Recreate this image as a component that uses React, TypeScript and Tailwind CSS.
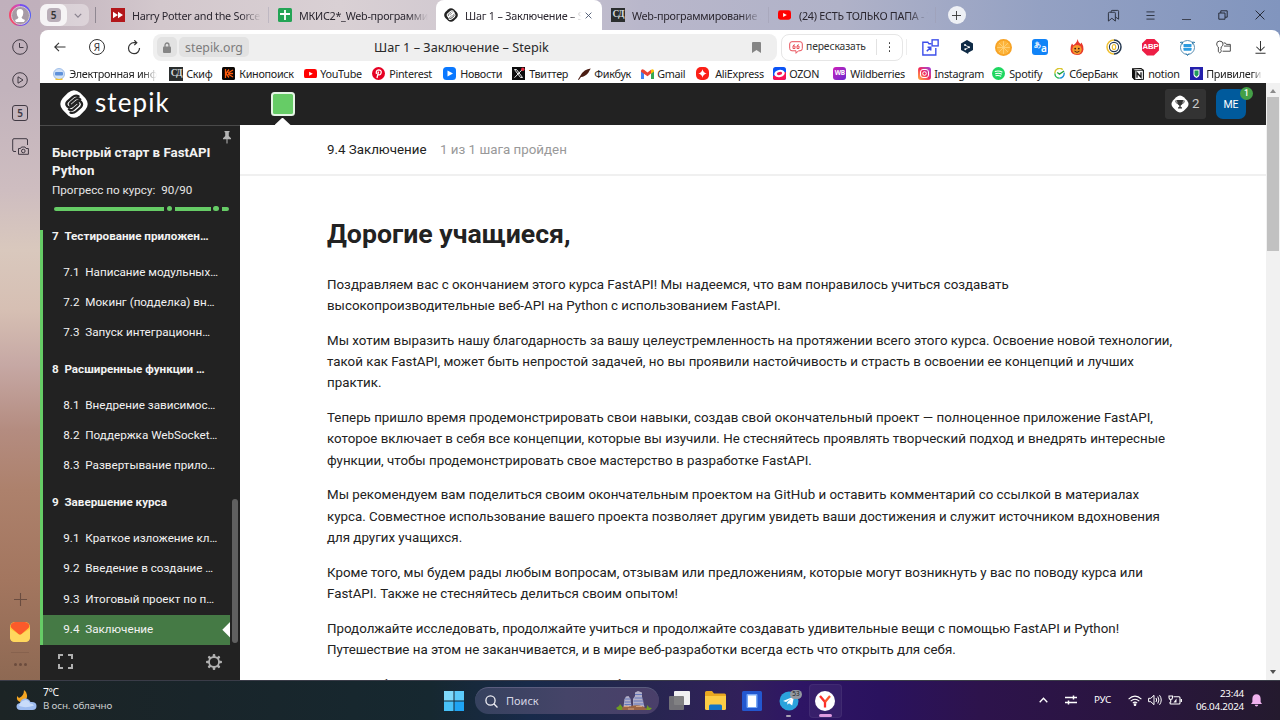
import React from 'react';
import type { ReactNode } from 'react';

type Kids = { children?: ReactNode };

/* ---------- browser tabs ---------- */

function StepikMark({ className, dark }: { className: string; dark?: boolean }) {
  const body = dark ? '#222' : '#fff';
  const ink = dark ? '#fff' : '#222';
  return (
    <svg viewBox="0 0 28 28" className={className}>
      <path d="M8 2.800Q14-2.200 20 2.800L25.200 8Q30.200 14 25.200 20L20 25.200Q14 30.200 8 25.200L2.800 20Q-2.200 14 2.800 8Z" fill={body} />
      <path d="M18.600 6.300Q15.300 4.800 12.500 7.200L7.400 11.600Q5.200 14 7.300 16.400Q9.800 18.400 12.500 16.200L16 13.200Q17.300 12.200 18.200 13.200Q19 14.200 17.900 15.300L13.200 19.300Q11.200 20.800 8.800 19.400" fill="none" stroke={ink} strokeWidth="2.200" strokeLinecap="round" />
      <path d="M10.400 22.600Q13.500 23.600 16.200 21.200L21 17Q23.200 14.500 21 11.800Q18.500 9.600 15.700 12L12.500 14.800Q11 15.800 10 14.900Q9.300 13.800 10.400 12.800L15 8.900Q17.500 7.400 20.300 9.300" fill="none" stroke={ink} strokeWidth="2.200" strokeLinecap="round" />
    </svg>
  );
}

function YouTubeMark({ className }: { className: string }) {
  return (
    <svg viewBox="0 0 14 10" className={className}>
      <rect width="14" height="10" rx="2.600" fill="#f00" />
      <path d="M5.500 2.800L9.500 5L5.500 7.200Z" fill="#fff" />
    </svg>
  );
}

function SkifMark() {
  return (
    <span className="flex size-3.5 shrink-0 items-center justify-center bg-[#2b2e2e] font-['Liberation_Serif',serif] text-[9.500px] leading-none font-bold tracking-[-0.1em] text-[#d5dada]">
      СД
    </span>
  );
}

const fade = 'overflow-hidden whitespace-nowrap [mask-image:linear-gradient(to_right,#000_84%,transparent)]';

function Tab({ icon, label, divider }: { icon: ReactNode; label: string; divider?: boolean }) {
  return (
    <div className="flex h-[30px] w-[167px] items-center pl-[9px]">
      <span className="flex w-[21px] shrink-0">{icon}</span>
      <span className={`${fade} w-[129px] pt-[2px] text-[10.8px] tracking-[-0.025em] text-[#2b2730]`}>{label}</span>
      {divider && <span className="ml-[7px] h-4 w-px bg-[#9c98ac]/40" />}
    </div>
  );
}

function TabStrip() {
  return (
    <div className="flex h-[30px] items-center">
      <div className="flex h-[22px] w-[49px] shrink-0 items-center rounded-[7px] bg-white/35">
        <div className="flex h-[22px] w-[27px] items-center justify-center rounded-[7px] bg-white/75">
          <span className="flex size-[14px] items-center justify-center rounded bg-[#b9aeb8] text-[10px] leading-none font-semibold text-[#333]">5</span>
        </div>
        <svg viewBox="0 0 10 6" className="ml-[7px] h-[5px] w-2"><path d="M1 1L5 5L9 1" fill="none" stroke="#8b8490" strokeWidth="1.600" /></svg>
      </div>
      <span className="ml-1.5 h-4 w-px shrink-0 bg-[#8f8791]" />
      <div className="ml-[6px] flex shrink-0 items-center">
        <Tab
          divider
          icon={<svg viewBox="0 0 14 14" className="size-3.5"><rect width="14" height="14" fill="#b3171b" /><path d="M2 3.800L7 7L2 10.200ZM7 3.800L12 7L7 10.200Z" fill="#fff" /></svg>}
          label="Harry Potter and the Sorcerer"
        />
        <Tab
          icon={<svg viewBox="0 0 14 14" className="size-3.5"><rect width="14" height="14" rx="1.500" fill="#23a455" /><path d="M7 2V12M2 6H12" stroke="#fff" strokeWidth="1.800" /></svg>}
          label="МКИС2*_Web-программирование"
        />
        <div className="flex h-[30px] w-[166px] items-center rounded-t-[8px] bg-white pl-[8px]">
          <StepikMark dark className="size-[14px] shrink-0" />
          <span className="ml-[7px] w-[119px] overflow-hidden pt-[2px] text-[10.800px] tracking-[-0.02em] whitespace-nowrap text-[#2b2730] [mask-image:linear-gradient(to_right,#000_88%,transparent_98%)]">
            Шаг 1 – Заключение – Stepik
          </span>
          <svg viewBox="0 0 8 8" className="ml-px size-[7px]"><path d="M.7.7L7.300 7.300M7.300.7L.7 7.300" stroke="#44506a" strokeWidth="1" /></svg>
        </div>
        <Tab divider icon={<SkifMark />} label="Web-программирование 2" />
        <Tab divider icon={<YouTubeMark className="h-[10px] w-[13px]" />} label="(24) ЕСТЬ ТОЛЬКО ПАПА - YouTube" />
      </div>
      <div className="ml-[11.500px] flex size-[18px] shrink-0 items-center justify-center rounded-full bg-[#eef0f5]">
        <svg viewBox="0 0 10 10" className="size-[9px]"><path d="M5 0V10M0 5H10" stroke="#333" strokeWidth="1" /></svg>
      </div>
      <div className="ml-[129px] flex shrink-0 items-center text-[#272c38]">
        <div className="flex w-[37px] justify-center">
          <svg viewBox="0 0 14 14" className="size-[13px]" fill="none" stroke="currentColor" strokeWidth="1"><path d="M1.500 4.500Q1.500 3.500 2.500 3.500H8Q9 3.500 9 4.500V13L5.250 10L1.500 13ZM4.500 3.500V2.500Q4.500 1.500 5.500 1.500H11.500Q12.500 1.500 12.500 2.500V11L9 8.500" /></svg>
        </div>
        <div className="flex w-[37px] justify-center">
          <svg viewBox="0 0 10 10" className="size-[9px]" stroke="currentColor" strokeWidth="1"><path d="M.5 1H9.500M.5 5H9.500M.5 9H9.500" /></svg>
        </div>
        <div className="flex w-[36px] justify-center pt-2">
          <span className="h-px w-[9px] bg-[#3d4252]" />
        </div>
        <div className="flex w-[37px] justify-center">
          <svg viewBox="0 0 10 10" className="size-[10px]" fill="none" stroke="currentColor" strokeWidth="1"><path d="M.8 3H7V9.200H.8ZM2.800 3V.8H9.200V7.200H7" /></svg>
        </div>
        <div className="flex w-[36px] justify-center">
          <svg viewBox="0 0 10 10" className="size-[10px]" stroke="currentColor" strokeWidth="1"><path d="M.6.6L9.400 9.400M9.400.6L.6 9.400" /></svg>
        </div>
      </div>
    </div>
  );
}

/* ---------- toolbar ---------- */

function Slot({ children }: Kids) {
  return <div className="flex w-[36.700px] shrink-0 items-center justify-center">{children}</div>;
}

function Toolbar() {
  return (
    <div className="flex h-9 items-center pb-[2px] text-[#333]">
      <div className="flex w-[113px] shrink-0 items-center pl-[2px]">
        <Slot><svg viewBox="0 0 12 10" className="h-[10px] w-3" fill="none" stroke="currentColor" strokeWidth="1.100"><path d="M11.500 5H1M5 .8L.8 5L5 9.200" /></svg></Slot>
        <Slot>
          <span className="flex size-4 items-center justify-center rounded-full border border-[#333] text-[10px] leading-none">Я</span>
        </Slot>
        <Slot><svg viewBox="0 0 14 15" className="h-[15px] w-[14px]" fill="none" stroke="currentColor" strokeWidth="1.200"><path d="M12.500 8A5.500 5.500 0 1 1 7 2.700H9.500M7.300.3L9.800 2.700L7.300 5.200" /></svg></Slot>
      </div>
      <div className="flex h-[27px] w-[624px] shrink-0 items-center rounded-lg bg-[#efefef] pl-1">
        <div className="flex h-[20px] w-5 items-center justify-center rounded-[5px] bg-[#e2e2e2]">
          <svg viewBox="0 0 8 11" className="h-[11px] w-2"><path d="M2 5V3.200A2 2.200 0 0 1 6 3.200V5" fill="none" stroke="#858585" strokeWidth="1.300" /><rect y="4.600" width="8" height="6.400" rx="1" fill="#858585" /></svg>
        </div>
        <div className="ml-0.5 flex h-[20px] w-[70px] items-center justify-center rounded-[5px] bg-[#e2e2e2] pt-[2px] text-[12.300px] text-[#7c7c7c]">stepik.org</div>
        <div className="ml-[125px] w-[378px] pt-[2px] text-[12.730px] whitespace-nowrap text-[#2a2a2a]">Шаг 1 – Заключение – Stepik</div>
        <svg viewBox="0 0 9 11" className="h-[11px] w-[9px]"><path d="M0 1Q0 0 1 0H8Q9 0 9 1V11L4.500 8L0 11Z" fill="#858585" /></svg>
      </div>
      <div className="ml-1 flex h-[27px] w-[122px] shrink-0 items-center rounded-lg border border-[#e6e6e6] pl-[7px]">
        <svg viewBox="0 0 14 13" className="h-[13px] w-[14px]" fill="none" stroke="#e8505b" strokeWidth="1">
          <path d="M3 .7H11Q13.300.7 13.300 3V7.500Q13.300 9.800 11 9.800H9.500L7 12.300V9.800H3Q.7 9.800.7 7.500V3Q.7.7 3 .7Z" />
          <path d="M5.500 3.300L4 5H6V7.500H4V5M9.500 3.300L8 5H10V7.500H8V5" />
        </svg>
        <span className="ml-[3px] w-[61px] text-[10.300px] tracking-[-0.01em] whitespace-nowrap text-[#333]">пересказать</span>
        <span className="ml-[9px] h-4 w-px bg-[#e2e2e2]" />
        <span className="ml-[12px] flex flex-col gap-[2.800px]">
          <i className="size-[1.300px] rounded-full bg-[#333]" /><i className="size-[1.300px] rounded-full bg-[#333]" /><i className="size-[1.300px] rounded-full bg-[#333]" />
        </span>
      </div>
      <span className="ml-[3px] h-4 w-px shrink-0 bg-[#ededed]" />
      <div className="ml-[5px] flex shrink-0 items-center">
        <Slot><svg viewBox="0 0 16 16" className="size-[17px]" fill="none" stroke="#3d4eea" strokeWidth="1.300"><path d="M9 4.500H6.500L5.500 3H.8V15H13V8.500" /><rect x="9.500" y=".8" width="5.700" height="5.700" /><path d="M4.500 11.500L8 8M5.200 7.800H8.200V10.800" strokeWidth="1.500" /></svg></Slot>
        <Slot><svg viewBox="0 0 14 14" className="size-[14px]"><path d="M7 0L13 3.500V10L8.500 12.500L8 14L7 13.200L1 10V3.500Z" fill="#0f2b46" /><path d="M5 5L9 7.200L5.500 9.200" fill="none" stroke="#fff" strokeWidth=".8" /><g fill="#fff"><circle cx="5" cy="5" r="1" /><circle cx="9" cy="7.200" r="1" /><circle cx="5.300" cy="9.200" r="1" /></g></svg></Slot>
        <Slot><svg viewBox="0 0 16 16" className="size-[17px]"><circle cx="8" cy="8" r="8" fill="#f7a325" /><circle cx="8" cy="8" r="6.300" fill="#fcb43c" /><path d="M8 2V14M2 8H14M3.800 3.800L12.200 12.200M12.200 3.800L3.800 12.200" stroke="#ffd27c" strokeWidth=".8" /></svg></Slot>
        <Slot>
          <div className="flex size-4 items-center justify-center rounded-[3px] bg-[#1183f7] text-[10px] leading-none font-semibold tracking-tight text-white"><span className="mb-[5px] text-[7px]">あ</span><span className="mt-0.5">a</span></div>
        </Slot>
        <Slot><svg viewBox="0 0 14 16" className="h-4 w-[14px]"><path d="M7.500 0Q8 3 10.500 5L11.500 3.500Q13.800 7 13.500 10.500Q12.500 16 7 16Q1 15.500.5 10.500Q.3 7 2 4.500L3.300 6.200Q7 4 7.500 0Z" fill="#e8392b" /><circle cx="7" cy="10.600" r="4.700" fill="#f79a2c" /><circle cx="5.200" cy="9.600" r=".9" fill="#3a1d14" /><circle cx="8.800" cy="9.600" r=".9" fill="#3a1d14" /><path d="M4.500 12.200Q7 14.500 9.500 12.200" fill="none" stroke="#3a1d14" strokeWidth=".9" /></svg></Slot>
        <Slot><svg viewBox="0 0 16 16" className="size-4" fill="none"><path d="M8 1A7 7 0 1 0 8 15" stroke="#f0c030" strokeWidth="1.500" /><path d="M8 1A7 7 0 0 1 8 15" stroke="#24374f" strokeWidth="1.500" /><circle cx="8" cy="8" r="4.600" stroke="#24374f" strokeWidth="1.100" /><ellipse cx="8" cy="8" rx="1.700" ry="2.500" stroke="#f0c030" strokeWidth="1.200" /></svg></Slot>
        <Slot>
          <div className="flex size-[17px] items-center justify-center bg-[#ed1e45] font-['Liberation_Sans',sans-serif] text-[7.800px] leading-none font-bold tracking-[-0.02em] text-white [clip-path:polygon(30%_0,70%_0,100%_30%,100%_70%,70%_100%,30%_100%,0_70%,0_30%)]">ABP</div>
        </Slot>
        <Slot><svg viewBox="0 0 17 17" className="size-[17px]" fill="none"><circle cx="8.500" cy="8.500" r="7" stroke="#5c8fb3" strokeWidth="1" /><rect x="4.500" y="5" width="8" height="3" rx=".6" fill="#2b9be0" /><rect x="4.500" y="8.700" width="8" height="3" rx=".6" fill="#2b9be0" /><path d="M1 3.500L3.500 3L3 5.500M16 3.500L13.500 3L14 5.500M7 14.500L8.500 16.500L10 14.500" stroke="#2b78a8" strokeWidth="1" /></svg></Slot>
        <Slot><svg viewBox="0 0 16 14" className="h-[14px] w-[15px]" fill="none" stroke="#444" strokeWidth="1"><path d="M2.500 7V12L4 13.300L5.500 12V10.500L5 9.500L5.500 8.500V7Q7.500 6 7.500 3.800Q7.300.7 4 .7Q.7.7.7 3.800Q.7 6 2.500 7" /><path d="M8 2.700H10L11 4.200H15.300V11.500H7M8.500 6H15" /></svg></Slot>
        <Slot><svg viewBox="0 0 12 14" className="h-[13px] w-[11px]" fill="none" stroke="#333" strokeWidth="1.100"><path d="M6 0V10.500M1.500 6.200L6 10.700L10.500 6.200M.5 13.400H11.500" /></svg></Slot>
      </div>
    </div>
  );
}

/* ---------- bookmarks ---------- */

const bookmarks: { label: string; slot: string; icon: ReactNode; gap: string; text?: string }[] = [
  {
    label: 'Электронная информ', slot: 'w-[116px]', gap: 'w-4', text: `${fade} w-[88px]`,
    icon: <svg viewBox="0 0 12 12" className="size-3"><circle cx="6" cy="6" r="5.500" fill="#cfe0f7" stroke="#8fb2e4" strokeWidth=".8" /><rect x="2" y="4" width="8" height="3.500" rx="1" fill="#5e90da" /><path d="M2.500 10.800Q6 12.500 9.500 10.800" stroke="#f2c22e" strokeWidth="1.500" fill="none" /></svg>,
  },
  { label: 'Скиф', slot: 'w-[53px]', gap: 'w-[17px]', icon: <SkifMark /> },
  {
    label: 'Кинопоиск', slot: 'w-[82px]', gap: 'w-[17px]',
    icon: <svg viewBox="0 0 13 13" className="size-[13px]"><rect width="13" height="13" rx="1.500" fill="#0c0705" /><path d="M3.500 2V11M4 6.500L7 2.500M4 6.500L7 10.500M6 6L11 3M6.500 6.500H11M6 7L11 10" stroke="#ff5a0a" strokeWidth="1.300" /></svg>,
  },
  { label: 'YouTube', slot: 'w-[68px]', gap: 'w-4', icon: <YouTubeMark className="h-[9.500px] w-[13px]" /> },
  {
    label: 'Pinterest', slot: 'w-[71px]', gap: 'w-[17px]',
    icon: <svg viewBox="0 0 13 13" className="size-[13px]"><circle cx="6.500" cy="6.500" r="6.500" fill="#e60023" /><path d="M6.500 4.500L5 11M4.500 7Q3.500 3 6.700 2.900Q9.500 3 9.200 5.500Q8.800 8 7 7.900Q6.200 7.800 6 7.200" fill="none" stroke="#fff" strokeWidth="1.300" /></svg>,
  },
  {
    label: 'Новости', slot: 'w-[69px]', gap: 'w-[17px]',
    icon: <svg viewBox="0 0 13 13" className="size-[13px]"><rect width="13" height="13" rx="3.500" fill="#0a78ff" /><path d="M4.500 3.500L10 6.500L4.500 9.500Z" fill="#fff" /></svg>,
  },
  {
    label: 'Твиттер', slot: 'w-[66px]', gap: 'w-[17px]',
    icon: <svg viewBox="0 0 13 13" className="size-[13px]"><rect width="13" height="13" fill="#0c0c0e" /><path d="M2.500 2.500H4.500L10.500 10.500H8.500Z" fill="none" stroke="#fff" strokeWidth=".9" /><path d="M10.500 2.300L2.500 10.700" stroke="#fff" strokeWidth=".9" /><circle cx="10.800" cy="2.200" r="1.700" fill="#e8283c" /></svg>,
  },
  {
    label: 'Фикбук', slot: 'w-[63px]', gap: 'w-4',
    icon: <svg viewBox="0 0 13 12" className="h-3 w-[13px]"><path d="M0 11.500L2.500 7.500Q6 1 12.800.5Q11.500 2.500 10.500 4.500Q7 8.800 3 9L.8 12Z" fill="#4a1d13" /></svg>,
  },
  {
    label: 'Gmail', slot: 'w-[55px]', gap: 'w-4',
    icon: <svg viewBox="0 0 13 10" className="h-[10px] w-[13px]"><path d="M0 1.500V10H3V4.300Z" fill="#4285f4" /><path d="M13 1.500V10H10V4.300Z" fill="#34a853" /><path d="M0 1.800Q.5-.8 3 .8L6.500 3.500L10 .8V4.500L6.500 7.200L0 2.800Z" fill="#ea4335" /><path d="M10 .8Q12.500-.8 13 1.800V2.500L10 4.700Z" fill="#fbbc04" /></svg>,
  },
  {
    label: 'AliExpress', slot: 'w-[77px]', gap: 'w-[19px]',
    icon: <svg viewBox="0 0 13 13" className="size-[13px]"><rect width="13" height="13" rx="5" fill="#fb1f16" /><path d="M6.500 2.300Q7.200 5.800 10.700 6.500Q7.200 7.200 6.500 10.700Q5.800 7.200 2.300 6.500Q5.800 5.800 6.500 2.300Z" fill="#fff" /></svg>,
  },
  {
    label: 'OZON', slot: 'w-[60px]', gap: 'w-4',
    icon: <svg viewBox="0 0 13 13" className="size-[13px]"><rect width="13" height="13" rx="2.500" fill="#0b53f5" /><path d="M0 9L13 5V10.500Q13 13 10.500 13H2.500Q0 13 0 10.500Z" fill="#f91155" /><ellipse cx="6.500" cy="6.500" rx="5.300" ry="3.700" fill="#fff" transform="rotate(-12 6.500 6.500)" /><ellipse cx="6.500" cy="6.500" rx="2.700" ry="1.600" fill="#f91155" transform="rotate(-12 6.500 6.500)" /></svg>,
  },
  {
    label: 'Wildberries', slot: 'w-[85px]', gap: 'w-[17px]',
    icon: <span className="flex size-[13px] items-center justify-center rounded-[3px] bg-linear-to-br from-[#ce12b8] to-[#6a1fd0] text-[6.500px] leading-none font-bold text-white">WB</span>,
  },
  {
    label: 'Instagram', slot: 'w-[74px]', gap: 'w-4',
    icon: (
      <span className="flex size-[13px] items-center justify-center rounded-[3px] bg-linear-to-tr from-[#ffb02e] via-[#f2235c] to-[#9a2be0]">
        <svg viewBox="0 0 9 9" className="size-[9px]" fill="none" stroke="#fff" strokeWidth="1"><rect x=".5" y=".5" width="8" height="8" rx="2.500" /><circle cx="4.500" cy="4.500" r="1.800" /></svg>
      </span>
    ),
  },
  {
    label: 'Spotify', slot: 'w-[62px]', gap: 'w-[17px]',
    icon: <svg viewBox="0 0 13 13" className="size-[13px]"><circle cx="6.500" cy="6.500" r="6.500" fill="#1ed760" /><path d="M2.800 4.500Q7 3.300 10.400 5.200M3.200 6.700Q7 5.700 9.800 7.200M3.500 8.800Q6.500 8 9.200 9.300" fill="none" stroke="#fff" strokeWidth="1.100" /></svg>,
  },
  {
    label: 'СберБанк', slot: 'w-[78px]', gap: 'w-[15px]',
    icon: <svg viewBox="0 0 12 12" className="size-[11px]" fill="none"><path d="M9.500 1.800A5 5 0 0 0 1 6" stroke="#d8c52c" strokeWidth="1.500" /><path d="M1 6A5 5 0 0 0 6 11" stroke="#21b34b" strokeWidth="1.500" /><path d="M6 11A5 5 0 0 0 11 5" stroke="#1a8fd6" strokeWidth="1.500" /><path d="M3.500 5L6 6.700L11 3.200" stroke="#21a038" strokeWidth="1.400" /></svg>,
  },
  {
    label: 'notion', slot: 'w-[58px]', gap: 'w-4',
    icon: <svg viewBox="0 0 12 12" className="size-3"><path d="M.6.9L9 .5L11.400 2.300V11.300L2.800 11.700L.6 9.200Z" fill="#fff" stroke="#111" strokeWidth="1.100" /><path d="M.6.900L3 2.700V11.500L.6 9.200ZM3 2.700L11.400 2.300" fill="#111" stroke="#111" strokeWidth=".8" /><path d="M5 9.800V4.800L9 9.300V4.300" fill="none" stroke="#111" strokeWidth="1.300" /></svg>,
  },
  {
    label: 'Привилегии', slot: 'w-[75px]', gap: 'w-4', text: `${fade} w-[56px]`,
    icon: <svg viewBox="0 0 13 13" className="size-[13px]"><rect width="13" height="13" fill="#2420ac" /><path d="M3.500 2.500H9.500V8Q9 10 6.500 11Q4 10 3.500 8Z" fill="#fff" /><path d="M4.500 3.500H8.500V7.500Q8 9 6.500 9.800Q5 9 4.500 7.500Z" fill="#1f9c5a" /></svg>,
  },
];

function Bookmarks() {
  return (
    <div className="flex h-[17px] items-start pl-[13.200px] text-[10.800px] tracking-[-0.027em] text-[#222]">
      {bookmarks.map((b) => (
        <div key={b.label} className={`${b.slot} flex h-[15px] shrink-0 items-center`}>
          <span className={`${b.gap} flex shrink-0`}>{b.icon}</span>
          <span className={`${b.text ?? 'whitespace-nowrap'} leading-[15px]`}>{b.label}</span>
        </div>
      ))}
    </div>
  );
}

/* ---------- browser side rail ---------- */

function Rail() {
  return (
    <div className="flex w-10 shrink-0 flex-col items-center bg-[linear-gradient(to_bottom,#c0b0bc_0px,#c2b3bc_90px,#cebdc0_190px,#d9c8bd_250px,#d6bfb3_310px,#c6a8a4_365px,#b48c80_430px,#ad816c_490px,#a3765f_580px,#8e6953_680px)] text-[#413a44]">
      <div className="mt-1 flex size-[22px] items-center justify-center rounded-full bg-[conic-gradient(#7a4bf0,#4f62f5_30%,#6b4bf5_45%,#f54a6d_60%,#f5476d_80%,#c24bd0)]">
        <div className="flex size-[19px] items-center justify-center rounded-full border border-[#d6ccd2] bg-[#a79ba5]">
          <svg viewBox="0 0 12 14" className="h-[15px] w-[12px]"><path d="M6 .5Q9.500.5 9.300 4.500Q9 8 7.500 8.800Q7.500 10.300 11 11.500L10 13.500H2L1 11.500Q4.500 10.300 4.500 8.800Q3 8 2.700 4.500Q2.500.5 6 .5Z" fill="#fff" /></svg>
        </div>
      </div>
      <svg viewBox="0 0 16 16" className="mt-[12.500px] size-4" fill="none" stroke="currentColor" strokeWidth="1"><circle cx="8" cy="8" r="7.300" /><path d="M7.500 4V8.500H11.500" /></svg>
      <svg viewBox="0 0 16 16" className="mt-[17.500px] size-4" fill="none" stroke="currentColor" strokeWidth="1"><circle cx="8" cy="8" r="7.300" /><path d="M6 4.800L11 8L6 11.200Z" /></svg>
      <div className="mt-[17px] flex size-4 items-center justify-center rounded-[3px] border border-[#413a44] text-[10px] leading-none font-semibold">5</div>
      <svg viewBox="0 0 17 17" className="mt-[17px] size-[17px]" fill="none" stroke="currentColor" strokeWidth="1">
        <path d="M4 13.500H2Q.7 13.500.7 12V2Q.7.7 2 .7H14Q15.500.7 15.500 2V7" /><path d="M6.500 10.500H8.500L9.500 9H13L14 10.500H16.400V16.300H6.500Z" /><circle cx="11.300" cy="13" r="1.800" />
      </svg>
      <svg viewBox="0 0 12 12" className="mt-[437.500px] size-[13px]"><path d="M6 0V12M0 6H12" stroke="#6a4c40" strokeWidth="1" /></svg>
      <svg viewBox="0 0 20 20" className="mt-[16.500px] size-5">
        <rect width="20" height="20" rx="5" fill="#ffc93c" /><path d="M0 7L10 13L20 7V15Q20 20 15 20H5Q0 20 0 15Z" fill="#ffd75e" /><path d="M1 2.500Q2.500 0 5 0H15Q17.500 0 19 2.500Q20 5 18 6.500L11.500 12Q10 13.200 8.500 12L2 6.500Q0 5 1 2.500Z" fill="#fb5a2b" />
      </svg>
      <span className="mt-[10px] h-px w-[18px] bg-[#87624e]" />
      <span className="mt-[10px] flex gap-[2px]"><i className="size-[3px] rounded-full bg-[#6b4b3d]" /><i className="size-[3px] rounded-full bg-[#6b4b3d]" /><i className="size-[3px] rounded-full bg-[#6b4b3d]" /></span>
    </div>
  );
}

/* ---------- course page ---------- */

function CourseHeader() {
  return (
    <div className="flex h-[42px] w-[1226px] bg-[#222]">
      <div className="flex w-[200px] items-start pt-[7px] pl-5">
        <StepikMark className="size-7" />
        <span className="-mt-[5px] ml-[7px] font-['Lato',sans-serif] text-[26px] leading-[34px] font-normal tracking-[1.100px] text-white">stepik</span>
      </div>
      <div className="flex w-[85px] flex-col items-center pt-[9px]">
        <div className="size-6 rounded-[3.500px] border-2 border-[#e6f5e6] bg-[#66cc66]" />
        <div className="mt-[1.500px] h-[7.500px] w-4 bg-white [clip-path:polygon(50%_0,100%_100%,0_100%)]" />
      </div>
      <div className="mt-1.5 mr-5 ml-auto flex h-[30px] gap-[10px]">
        <div className="flex w-[41px] items-center rounded-[3px] bg-[#333] pl-[6px]">
          <svg viewBox="0 0 18 18" className="size-[18px]">
            <path d="M5.200 2.200Q9-1.300 12.800 2.200L15.800 5.200Q19.300 9 15.800 12.800L12.800 15.800Q9 19.300 5.200 15.800L2.200 12.800Q-1.300 9 2.200 5.200Z" fill="#fff" />
            <path d="M6 5H12Q12 9.500 9.700 10.500V12.500H8.300V10.500Q6 9.500 6 5ZM7 12.300H11V13.500H7Z" fill="#333" /><path d="M6 5.800H4.700Q4.700 8.300 6.700 8.700M12 5.800H13.300Q13.300 8.300 11.300 8.700" fill="none" stroke="#333" strokeWidth=".8" />
          </svg>
          <span className="ml-[3px] text-[13.300px] text-[#ccc]">2</span>
        </div>
        <div className="relative flex w-[30px] items-center justify-center rounded-[7px] bg-[#005a9c] pt-px text-[10.500px] text-white">
          ME
          <span className="absolute -top-[2px] -right-[7px] flex size-[13px] items-center justify-center rounded-full bg-[#44a047] text-[8.500px] font-medium">1</span>
        </div>
      </div>
    </div>
  );
}

const sections = [
  { n: '7', title: 'Тестирование приложен…', items: ['Написание модульных…', 'Мокинг (подделка) вн…', 'Запуск интеграционн…'] },
  { n: '8', title: 'Расширенные функции …', items: ['Внедрение зависимос…', 'Поддержка WebSocket…', 'Развертывание прило…'] },
  { n: '9', title: 'Завершение курса', items: ['Краткое изложение кл…', 'Введение в создание …', 'Итоговый проект по п…', 'Заключение'] },
];

function Sidebar() {
  return (
    <div className="relative flex w-[200px] shrink-0 flex-col border-t border-[#4a4a4a] bg-[#222] text-[#f2f2f2]">
      <svg viewBox="0 0 8 13" className="absolute top-[5px] right-[9px] h-[13px] w-2"><path d="M1.500 0H6.500V1.200H5.800V5L8 7.300V8.300H4.500V12.500H3.500V8.300H0V7.300L2.200 5V1.200H1.500Z" fill="#b5b5b5" /></svg>
      <div className="pt-[17.500px] pl-3">
        <div className="text-[13.330px] leading-[18.300px] font-bold">Быстрый старт в FastAPI<br />Python</div>
        <div className="mt-[1.700px] text-[11.670px] leading-[17px] text-[#e6e6e6]">Прогресс по курсу:<span className="ml-[6px]">90/90</span></div>
        <div className="mt-[7.300px] ml-[1.500px] flex h-[5px] items-center">
          <i className="h-[4px] w-[110.500px] rounded-l-full bg-[#66cc66]" />
          <i className="ml-[2.700px] size-[5.300px] rounded-full bg-[#66cc66]" />
          <i className="ml-[3px] h-[4px] w-[36px] bg-[#66cc66]" />
          <i className="ml-[2.500px] size-[5.300px] rounded-full bg-[#66cc66]" />
          <i className="ml-[3px] h-[4px] w-[7px] rounded-r-full bg-[#66cc66]" />
        </div>
      </div>
      <div className="mt-[4px] flex bg-[linear-gradient(#66cc66,#66cc66)] bg-[length:3.300px_415px] bg-[position:left_bottom] bg-no-repeat">
        <div className="ml-[3.300px] w-[187px]">
          {sections.map((s) => (
            <div key={s.n}>
              <div className="flex h-[42.400px] items-center pl-[8.700px] text-[11.670px] font-bold">
                <span className="w-[12.400px]">{s.n}</span>{s.title}
              </div>
              {s.items.map((t, i) => {
                const on = t === 'Заключение';
                return (
                  <div key={t} className={`flex h-[30.250px] items-center pl-[20px] text-[11.670px] ${on ? 'bg-[#457a45]' : ''}`}>
                    <span className="w-[22px]">{s.n}.{i + 1}</span>{t}
                    {on && <span className="ml-auto h-4 w-2 bg-white [clip-path:polygon(100%_0,100%_100%,0_50%)]" />}
                  </div>
                );
              })}
            </div>
          ))}
        </div>
        <span className="mb-[2px] ml-[1.700px] h-[144px] w-1.5 self-end rounded-full bg-[#606060]" />
      </div>
      <div className="flex h-[34px] items-center justify-between pr-[18px] pl-[18px] text-[#b0b0b0]">
        <svg viewBox="0 0 15 15" className="size-[15px]" fill="none" stroke="currentColor" strokeWidth="2"><path d="M1 5V1H5M10 1H14V5M14 10V14H10M5 14H1V10" /></svg>
        <svg viewBox="0 0 16 16" className="size-4">
          <g fill="currentColor">
            <rect x="6.700" y="0" width="2.600" height="16" rx="1" /><rect x="6.700" y="0" width="2.600" height="16" rx="1" transform="rotate(45 8 8)" /><rect x="6.700" y="0" width="2.600" height="16" rx="1" transform="rotate(90 8 8)" /><rect x="6.700" y="0" width="2.600" height="16" rx="1" transform="rotate(135 8 8)" />
          </g>
          <circle cx="8" cy="8" r="5" fill="#222" stroke="currentColor" strokeWidth="1.800" />
        </svg>
      </div>
    </div>
  );
}

function Lesson() {
  return (
    <div className="w-[1026px] overflow-hidden bg-white text-[#222]">
      <div className="flex h-[51px] items-center border-b-2 border-[#f0f0f0] pl-[87px] text-[13.330px]">
        9.4 Заключение<span className="ml-[13.500px] text-[#999]">1 из 1 шага пройден</span>
      </div>
      <div className="pt-[41px] pl-[87px]">
        <h1 className="text-[26.660px] leading-[34px] font-bold">Дорогие учащиеся,</h1>
        <div className="mt-[22.700px] flex flex-col gap-[13.330px] text-[13.330px] leading-[21.330px] whitespace-nowrap">
          <p>Поздравляем вас с окончанием этого курса FastAPI! Мы надеемся, что вам понравилось учиться создавать<br />высокопроизводительные веб-API на Python с использованием FastAPI.</p>
          <p>Мы хотим выразить нашу благодарность за вашу целеустремленность на протяжении всего этого курса. Освоение новой технологии,<br />такой как FastAPI, может быть непростой задачей, но вы проявили настойчивость и страсть в освоении ее концепций и лучших<br />практик.</p>
          <p>Теперь пришло время продемонстрировать свои навыки, создав свой окончательный проект — полноценное приложение FastAPI,<br />которое включает в себя все концепции, которые вы изучили. Не стесняйтесь проявлять творческий подход и внедрять интересные<br />функции, чтобы продемонстрировать свое мастерство в разработке FastAPI.</p>
          <p>Мы рекомендуем вам поделиться своим окончательным проектом на GitHub и оставить комментарий со ссылкой в материалах<br />курса. Совместное использование вашего проекта позволяет другим увидеть ваши достижения и служит источником вдохновения<br />для других учащихся.</p>
          <p>Кроме того, мы будем рады любым вопросам, отзывам или предложениям, которые могут возникнуть у вас по поводу курса или<br />FastAPI. Также не стесняйтесь делиться своим опытом!</p>
          <p>Продолжайте исследовать, продолжайте учиться и продолжайте создавать удивительные вещи с помощью FastAPI и Python!<br />Путешествие на этом не заканчивается, и в мире веб-разработки всегда есть что открыть для себя.</p>
          <p>Еще раз благодарим вас за участие, и желаю быть</p>
        </div>
      </div>
    </div>
  );
}

function PageScrollbar() {
  return (
    <div className="flex w-[14px] shrink-0 flex-col items-center bg-[#f1f1f1]">
      <svg viewBox="0 0 6 4" className="mt-[6px] h-1 w-1.5"><path d="M3 0L6 4H0Z" fill="#8b8b8b" /></svg>
      <span className="mt-1 h-[154px] w-3 bg-[#c1c1c1]" />
      <svg viewBox="0 0 6 4" className="mt-auto mb-[6px] h-1 w-1.5"><path d="M3 4L6 0H0Z" fill="#505050" /></svg>
    </div>
  );
}

/* ---------- taskbar ---------- */

function Taskbar() {
  return (
    <div className="flex h-10 shrink-0 items-center border-t border-[#3a3c48] bg-[linear-gradient(to_right,#1c2425_0px,#19252a_200px,#162830_430px,#182a4a_530px,#26264f_640px,#31205a_740px,#2e1565_800px,#2a125e_880px,#2d134c_980px,#2a1540_1120px,#241a2e_1280px)] text-white">
      <div className="flex w-[443px] shrink-0 items-center pb-px pl-4">
        <svg viewBox="0 0 21 21" className="size-[21px]">
          <path d="M8 0Q8 6 3 8L1 6Q0 12 6 12Q12 10 11 5Q10.500 1.500 8 0Z" fill="#f5a623" />
          <path d="M4.500 20Q.5 20 .5 16.300Q.8 13.500 4 13Q5 8.500 9.500 8.500Q13 8.500 14.500 12Q20.500 11.500 20.500 16Q20.500 20 16.500 20Z" fill="#9dbcf0" /><path d="M3 16Q4 11 9.500 10Q13 10 14 13.500Q17 13.500 18 15.500Q10 18.500 3 16Z" fill="#c8dcfa" />
        </svg>
        <div className="ml-[6px] pb-[2px] text-[9.800px] leading-[13px] tracking-[-0.015em]">
          <div className="text-[10.300px] tracking-[-0.04em]">7°C</div>
          <div className="text-[#c9cdce]">В осн. облачно</div>
        </div>
      </div>
      <svg viewBox="0 0 20 20" className="ml-px size-5 shrink-0"><path d="M0 0H9.500V9.500H0Z" fill="#7fd9fb" /><path d="M10.500 0H20V9.500H10.500Z" fill="#5bcafa" /><path d="M0 10.500H9.500V20H0Z" fill="#48c2f8" /><path d="M10.500 10.500H20V20H10.500Z" fill="#1fa4f3" /></svg>
      <div className="ml-[11px] flex h-[27px] w-[184px] shrink-0 items-center rounded-full border-t border-[#5b5d7e] bg-[linear-gradient(to_right,#36425f,#454468_50%,#4a3f6a)] pl-[10px]">
        <svg viewBox="0 0 13 13" className="size-[13px]" fill="none" stroke="#f0f0f5" strokeWidth="1.300"><circle cx="5.500" cy="5.500" r="4.600" /><path d="M8.800 8.800L12.500 12.500" /></svg>
        <span className="ml-2 text-[11px] text-[#d6d6e4]">Поиск</span>
        <svg viewBox="0 0 36 20" className="mr-[7px] ml-auto h-5 w-9">
          <path d="M7.500 16L8.500 8L10 5.500L12.500 5L14.500 8L15.500 16ZM17 16V8L19 5V1.500L22 0L26 1.500V6L28.500 16Z" fill="#b3b0c8" />
          <path d="M9 8H14.500M8.500 11H15M8.500 13.500H15M19 3.500H26M18.500 7H26.500M17.500 10H27.500M17.500 13H28" stroke="#6577bb" strokeWidth="1" />
          <path d="M4 19Q8 13 14 15.500Q20 13 27 15.500L33 19Z" fill="#9a6444" /><path d="M8 15.500H13M20 15.500H26M12 18H18" stroke="#d6a27c" strokeWidth="1.200" />
          <path d="M0 17L3 15L4 13L6.500 16L6 19H2ZM30 19L31.500 14L33 16.500L36 17L34 19Z" fill="#6f9c22" />
        </svg>
      </div>
      <div className="ml-[10px] flex shrink-0 items-center">
        <svg viewBox="0 0 21 19" className="h-[19px] w-[21px]"><rect x="5" y="0" width="16" height="14" rx="1" fill="#f0f0f2" /><rect x="0" y="5" width="15" height="14" rx="1" fill="#77777a" opacity=".92" /></svg>
        <svg viewBox="0 0 21 19" className="ml-[15px] h-[19px] w-[21px]"><path d="M0 1.500Q0 0 1.500 0H7L9 2.500H19.500Q21 2.500 21 4V18H0Z" fill="#e9a820" /><path d="M0 5H21V17.500Q21 19 19.500 19H1.500Q0 19 0 17.500Z" fill="#fccc45" /><path d="M4 15Q4 13.500 5.500 13.500H15.500Q17 13.500 17 15V19H4Z" fill="#1374c6" /></svg>
        <svg viewBox="0 0 20 20" className="ml-[16px] size-5"><rect width="20" height="20" rx="1.500" fill="#2357cf" /><rect x="4.500" y="3" width="11" height="14" rx="1" fill="#79a8f5" /><rect x="6" y="4.500" width="8" height="11.500" fill="#fff" /></svg>
        <div className="relative ml-[17px] h-[30px] w-5 pt-[5px]">
          <svg viewBox="0 0 20 20" className="size-5"><circle cx="10" cy="10" r="9.500" fill="#2ba3dc" /><path d="M4 10L15 5.500L13.200 14.500L10 12.200L8.500 13.800L8.200 11.300L12.500 7.500L7 11Z" fill="#fff" /></svg>
          <span className="absolute top-[4px] left-[11px] flex h-[9px] w-[12px] items-center justify-center rounded-full bg-[#9297a0] text-[6.500px] leading-none text-[#222]">53</span>
          <i className="absolute -bottom-px left-[7px] h-[2px] w-[5px] rounded-full bg-[#a9a2b5]" />
        </div>
        <div className="relative ml-[9.500px] flex h-[34px] w-[33px] items-center justify-center rounded-[4px] border border-white/5 bg-white/5">
          <svg viewBox="0 0 20 20" className="size-5"><circle cx="10" cy="10" r="10" fill="#fff" /><path d="M5 5L10 11V16.500" fill="none" stroke="#fc2f2a" strokeWidth="2.300" /><path d="M15 5L10 11" stroke="#f8562c" strokeWidth="2.300" /></svg>
          <i className="absolute bottom-0 left-[9.500px] h-[2.500px] w-[13px] rounded-full bg-[#e09be0]" />
        </div>
      </div>
      <div className="ml-auto flex shrink-0 items-center pb-px">
        <svg viewBox="0 0 9 6" className="h-1.5 w-[9px]"><path d="M.7 5.300L4.500 1.200L8.300 5.300" fill="none" stroke="#fff" strokeWidth="1.300" /></svg>
        <svg viewBox="0 0 12 10" className="ml-[17px] h-[10px] w-3" fill="none" stroke="#fff" strokeWidth="1.500"><path d="M0 2.500H12M0 7.500H12M8.500.5V4.500M3.500 5.500V9.500" /></svg>
        <span className="ml-[17px] w-[18px] text-[9.800px] tracking-[-0.02em]">РУС</span>
        <svg viewBox="0 0 14 11" className="ml-[16px] h-[11px] w-[14px]" fill="none" stroke="#fff" strokeWidth="1.100"><path d="M.6 4.200Q7-1.800 13.400 4.200M2.700 6.200Q7 2.300 11.300 6.200M4.800 8.200Q7 6.200 9.200 8.200" /><circle cx="7" cy="9.700" r=".8" fill="#fff" /></svg>
        <svg viewBox="0 0 14 12" className="ml-[6px] h-3 w-[14px]" fill="none" stroke="#fff" strokeWidth="1"><path d="M.6 4.300H2.800L6 1.300V10.700L2.800 7.700H.6ZM8 4Q9.300 6 8 8M9.800 2.500Q12 6 9.800 9.500M11.500 1.200Q15 6 11.500 10.800" /></svg>
        <svg viewBox="0 0 14 12" className="ml-[6px] h-3 w-[14px]" fill="none" stroke="#fff" strokeWidth="1.100"><path d="M5.500 2.700H11Q12 2.700 12 3.700V9Q12 10 11 10H3Q2 10 2 9V8M13.400 5V8" /><path d="M1 1.500V3.500Q1 5.500 2.700 5.500Q4.500 5.500 4.500 3.500V1.500M.5 2H5M2.700 5.500V8.500" /><path d="M5.500 8.500L8.500 4.500V8.500Z" fill="#fff" stroke="none" /></svg>
        <div className="ml-[11px] w-[51px] pb-px text-right text-[9.800px] leading-[13px] tracking-[-0.02em]">
          <div>23:44</div>
          <div>06.04.2024</div>
        </div>
        <svg viewBox="0 0 12 14" className="mr-[18px] ml-[7px] h-[13px] w-[11px]"><path d="M6 .3Q10.300.5 10.500 5V8.500L12 10.800H0L1.500 8.500V5Q1.700.5 6 .3ZM4 11.600H8Q7.500 13.500 6 13.500Q4.500 13.500 4 11.600Z" fill="#f0b2ee" /></svg>
      </div>
    </div>
  );
}

export default function App() {
  return (
    <div className="flex h-[720px] w-[1280px] flex-col overflow-hidden font-['Noto_Sans',sans-serif]">
      <div className="flex h-[680px] overflow-hidden">
        <Rail />
        <div className="flex w-[1240px] flex-col bg-[linear-gradient(to_right,#c3b4be_0px,#d3c8cd_120px,#d9d0d4_300px,#d0c8d0_440px,#b9b7cb_600px,#b0b2c8_800px,#94a1c3_1000px,#8195be_1240px)]">
          <TabStrip />
          <div className="rounded-t-lg bg-white">
            <Toolbar />
            <Bookmarks />
          </div>
          <div className="flex h-[597px] font-['Roboto',sans-serif]">
            <div className="flex w-[1226px] shrink-0 flex-col">
              <CourseHeader />
              <div className="flex h-[555px]">
                <Sidebar />
                <Lesson />
              </div>
            </div>
            <PageScrollbar />
          </div>
        </div>
      </div>
      <Taskbar />
    </div>
  );
}
